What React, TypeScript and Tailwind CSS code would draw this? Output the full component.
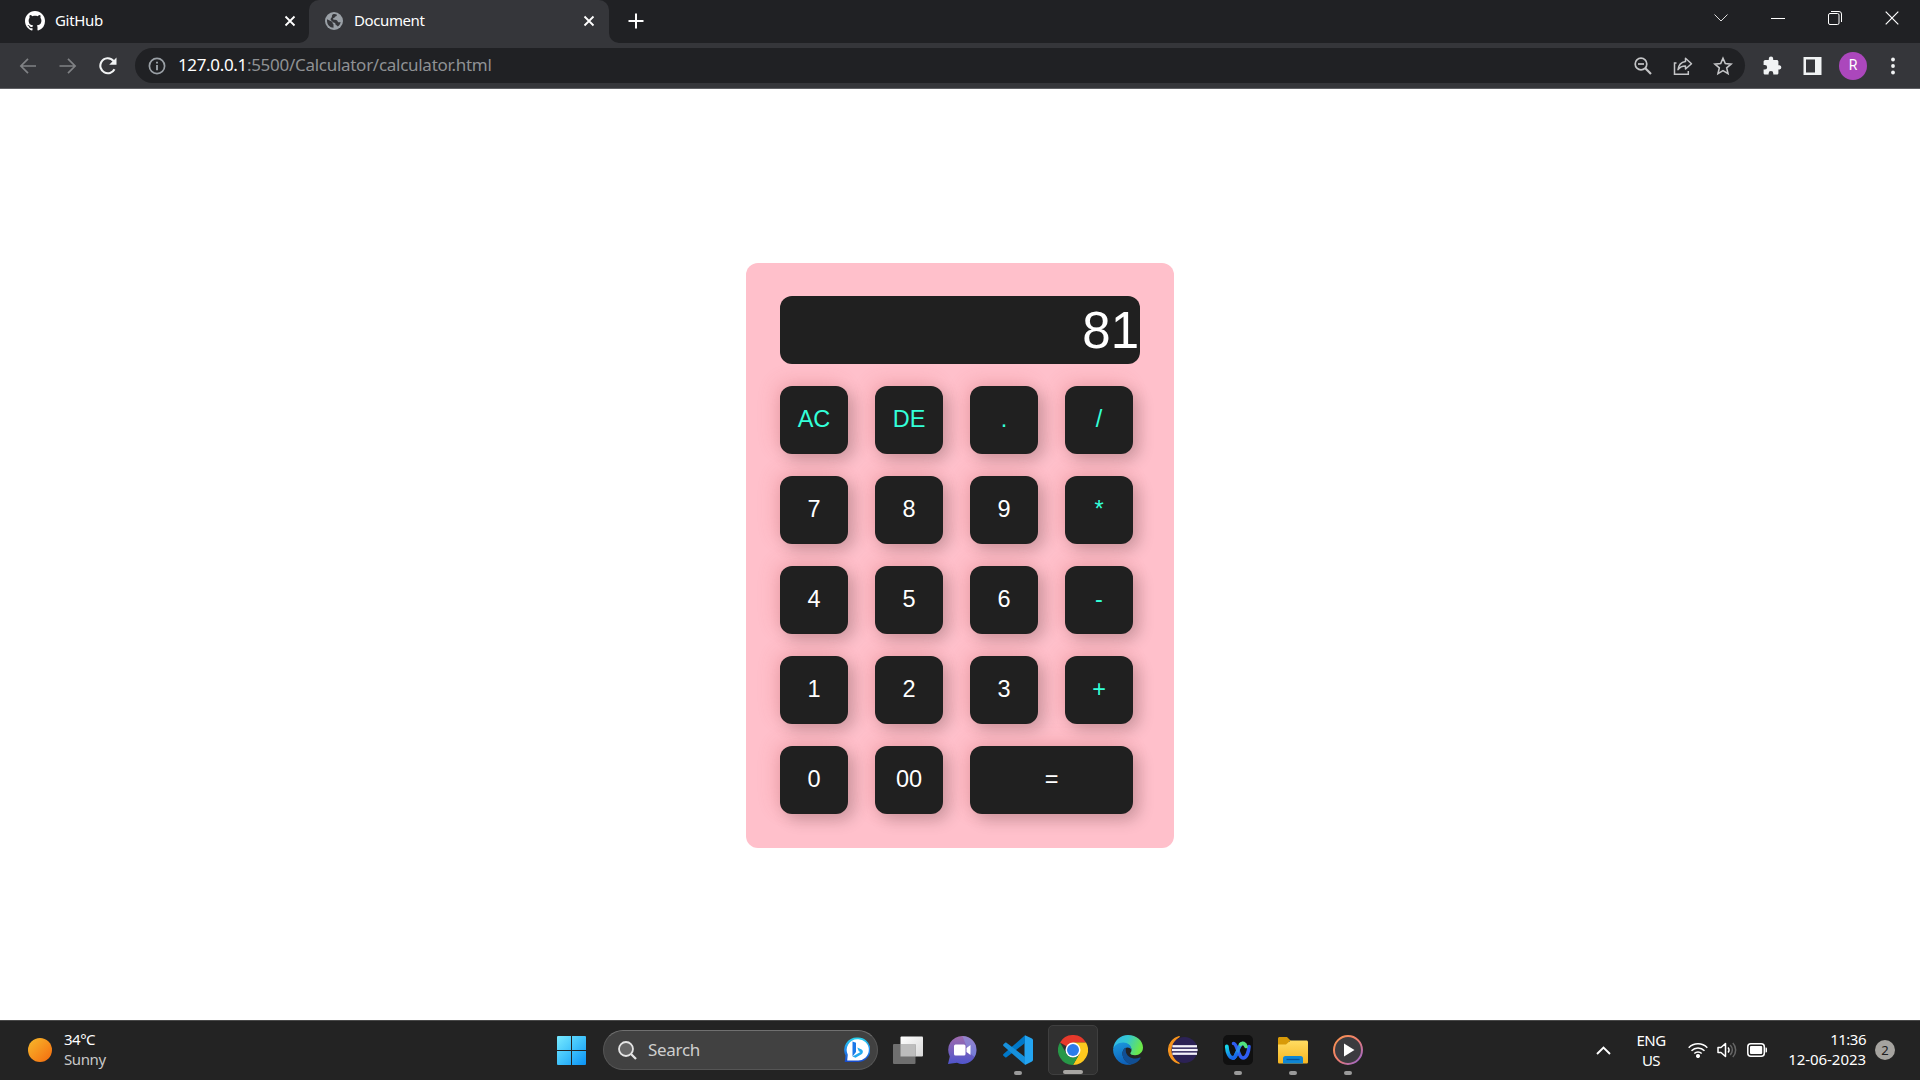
import React from "react";

function Close() {
  return (
    <svg width="12" height="12" viewBox="0 0 12 12" className="block shrink-0">
      <path d="M1.5 1.5l9 9M10.5 1.5l-9 9" stroke="#fff" strokeWidth="1.8" />
    </svg>
  );
}

function TabStrip() {
  return (
    <header className="flex h-[43px] bg-[#202124] text-[15px] leading-5 text-white">
      <div className="flex w-[309px] items-center rounded-br-[10px] bg-[#202124] pr-[13px] pb-px pl-[25px]">
        <svg width="20" height="20" viewBox="0 0 16 16" fill="#fff" className="shrink-0">
          <path d="M8 0C3.58 0 0 3.58 0 8c0 3.54 2.29 6.53 5.47 7.59.4.07.55-.17.55-.38 0-.19-.01-.82-.01-1.49-2.01.37-2.53-.49-2.69-.94-.09-.23-.48-.94-.82-1.13-.28-.15-.68-.52-.01-.53.63-.01 1.08.58 1.23.82.72 1.21 1.87.87 2.33.66.07-.52.28-.87.51-1.07-1.78-.2-3.64-.89-3.64-3.95 0-.87.31-1.59.82-2.15-.08-.2-.36-1.02.08-2.12 0 0 .67-.21 2.2.82.64-.18 1.32-.27 2-.27s1.36.09 2 .27c1.53-1.04 2.2-.82 2.2-.82.44 1.1.16 1.92.08 2.12.51.56.82 1.27.82 2.15 0 3.07-1.87 3.75-3.65 3.95.29.25.54.73.54 1.48 0 1.07-.01 1.93-.01 2.2 0 .21.15.46.55.38A8.01 8.01 0 0016 8c0-4.42-3.58-8-8-8z" />
        </svg>
        <span className="ml-[10px] flex-1 pb-[3px] tracking-[-0.3px]">GitHub</span>
        <Close />
      </div>
      <div className="relative flex w-[300px] items-center rounded-t-[10px] bg-[#35363a] pr-[14px] pb-px pl-4">
        <svg width="10" height="10" className="absolute bottom-0 -left-[10px]"><path d="M10 0v10H0A10 10 0 0010 0z" fill="#35363a" /></svg>
        <svg width="10" height="10" className="absolute -right-[10px] bottom-0"><path d="M0 0v10h10A10 10 0 010 0z" fill="#35363a" /></svg>
        <svg width="18" height="18" viewBox="0 0 18 18" className="shrink-0">
          <circle cx="9" cy="9" r="9" fill="#9aa0a6" />
          <path d="M2 7.200l5.200 2.500c.8 1 .1 2 1.300 2.500v3.500C4.800 15.600 2.200 12.800 2 9zM8 2.200c1.500-.4 2.800-.1 4 .5-.2 1.100-.7 1.700-1.900 1.800-.3 1.200-1 1.500-2 1.700-.1 1.200.6 1.600 1.600 1.500 1.500-.2 2.800.6 3.200 2 .2.900 1.300.8 2.700.2-.3 1.900-1.400 3.600-2.900 4.600-.4-1-.9-1.500-2-1.600 0-1.600-.8-2.300-2.200-2.500L5.700 8.100C5.500 6.800 6 5.800 7 5c-.4-1.300.1-2 1-2.800z" fill="#35363a" />
        </svg>
        <span className="ml-[11px] flex-1 pb-[3px] tracking-[-0.4px]">Document</span>
        <Close />
      </div>
      <svg width="16" height="16" viewBox="0 0 16 16" className="mt-[13px] ml-[19px]"><path d="M8 .5v15M.5 8h15" stroke="#fff" strokeWidth="2" /></svg>
      <div className="mr-[21px] ml-auto flex h-[36px] items-center gap-[43px]">
        <svg width="14" height="8" viewBox="0 0 14 8" fill="none" stroke="#ddd"><path d="M.5.5L7 7 13.500.5" /></svg>
        <svg width="14" height="14" viewBox="0 0 14 14"><path d="M0 7.500h14" stroke="#fff" /></svg>
        <svg width="14" height="14" viewBox="0 0 14 14" fill="none" stroke="#fff"><rect x=".5" y="2.500" width="10.500" height="11" rx="1.500" /><path d="M3 .5h8a2.500 2.500 0 012.500 2.500v8" /></svg>
        <svg width="14" height="14" viewBox="0 0 14 14" stroke="#fff" strokeWidth="1.200"><path d="M.7.7l12.600 12.600M13.300.7L.7 13.300" /></svg>
      </div>
    </header>
  );
}

function Toolbar() {
  return (
    <div className="flex h-[46px] items-center border-b border-[#5f6064] bg-[#35363a]">
      <div className="flex w-[135px] items-center pl-[19px]">
        <svg width="18" height="18" viewBox="0 0 18 18" fill="none" stroke="#808285" strokeWidth="1.700"><path d="M17 9H2M9 1.800L1.900 9 9 16.200" /></svg>
        <svg width="18" height="18" viewBox="0 0 18 18" fill="none" stroke="#808285" strokeWidth="1.700" className="ml-[22px]"><path d="M.5 9h15M9 1.800L16.100 9 9 16.200" /></svg>
        <svg width="19" height="18" viewBox="0 0 19 18" className="ml-[22px]"><path d="M15.500 12.200A7.300 7.300 0 112.200 5.200 7.300 7.300 0 0114.800 4.500" fill="none" stroke="#f1f3f4" strokeWidth="2.100" /><path d="M17.500.5v7.300h-7.300z" fill="#f1f3f4" /></svg>
      </div>
      <div className="flex h-[35px] w-[1610px] items-center rounded-full bg-[#202124] pr-3 pl-[13px]">
        <svg width="18" height="18" viewBox="0 0 18 18" fill="none" stroke="#9aa0a6" strokeWidth="1.700"><circle cx="9" cy="9" r="7.600" /><path d="M9 8v5.200M9 4.800v1.700" strokeWidth="1.900" /></svg>
        <span className="ml-3 flex-1 pb-px text-[17px] leading-6 tracking-[-0.28px] whitespace-nowrap text-[#8f9194]"><span className="tracking-[-0.35px] text-white">127.0.0.1</span>:5500/Calculator/calculator.html</span>
        <svg width="18" height="18" viewBox="0 0 18 18" fill="none" stroke="#c4c5c7" strokeWidth="1.700"><circle cx="7" cy="7" r="5.800" /><path d="M11.300 11.300l5.700 5.700" strokeWidth="2.200" /><path d="M4 7h6" /></svg>
        <svg width="20" height="20" viewBox="0 0 20 20" fill="none" stroke="#c4c5c7" strokeWidth="1.500" className="ml-[21px]"><path d="M3.500 7H1.500v11.200h13.800V15" /><path d="M12.500 2.200L18.500 7.700l-6 5.300V9.900c-3.400 0-5.700 1-7.500 3.800.4-4 2.800-7.400 7.500-8.200z" strokeLinejoin="round" /></svg>
        <svg width="20" height="20" viewBox="0 0 20 20" fill="none" stroke="#c4c5c7" strokeWidth="1.600" className="ml-5"><path d="M10 2.300l2.300 5.300 5.800.5-4.400 3.800 1.300 5.700-5-3-5 3 1.300-5.700-4.400-3.800 5.800-.5z" /></svg>
      </div>
      <svg width="20" height="20" viewBox="0 0 20 20" fill="#f1f3f4" className="ml-[17px]"><path d="M17.600 9.200h-1.200V5.600c0-1-.8-1.700-1.700-1.700h-3.500V2.800a2.200 2.200 0 00-4.400 0v1.100H3.300c-1 0-1.700.8-1.700 1.700v3.300h1.200a2.300 2.300 0 010 4.700H1.600v3.300c0 1 .8 1.700 1.700 1.700h3.300v-1.200a2.300 2.300 0 014.700 0v1.200h3.400c1 0 1.700-.8 1.700-1.700v-3.400h1.200a2.200 2.200 0 000-4.300z" /></svg>
      <svg width="19" height="18" viewBox="0 0 19 18" className="ml-[21px]"><path fillRule="evenodd" d="M.5 0h18v18H.5zM3 2.500v13h9v-13z" fill="#f1f3f4" /></svg>
      <div className="ml-[17px] flex size-7 items-center justify-center rounded-full bg-[#ab47bc] font-['Roboto',sans-serif] text-[14px] text-white">R</div>
      <svg width="4" height="18" viewBox="0 0 4 18" fill="#f1f3f4" className="ml-[24px]"><circle cx="2" cy="2.500" r="1.900" /><circle cx="2" cy="9" r="1.900" /><circle cx="2" cy="15.500" r="1.900" /></svg>
    </div>
  );
}

const keys = ["AC", "DE", ".", "/", "7", "8", "9", "*", "4", "5", "6", "-", "1", "2", "3", "+", "0", "00", "="];
const operators = ["AC", "DE", ".", "/", "*", "-", "+"];

function Calculator() {
  return (
    <section className="h-[585px] w-[428px] rounded-[12px] bg-[#ffc0cb] px-[34px] pt-[33px] font-['Liberation_Sans',Arial,sans-serif]">
      <div className="flex h-[68px] w-[360px] items-center justify-end rounded-[12px] bg-[#202020] pr-[1px] text-[51px] leading-none text-white">81</div>
      <div className="mt-[22px] grid grid-cols-[repeat(4,68px)] gap-x-[27px] gap-y-[22px]">
        {keys.map((k) => (
          <button
            key={k}
            className={`h-[68px] rounded-[12px] bg-[#202020] pb-px text-[23.500px] leading-none shadow-[-4px_-4px_19px_rgba(205,70,70,0.2),6px_6px_16px_rgba(0,0,0,0.2)] ${operators.includes(k) ? "text-[#33ffd8]" : "text-white"} ${k === "=" ? "col-span-2" : ""}`}
          >
            {k}
          </button>
        ))}
      </div>
    </section>
  );
}

function Dot() {
  return <span className="absolute -bottom-[10px] left-[11px] h-1 w-2 rounded-full bg-[#9a9a9a]" />;
}

function App30({ children, running }: { children: React.ReactNode; running?: boolean }) {
  return (
    <div className="relative size-[30px]">
      <svg width="30" height="30" viewBox="0 0 30 30" className="block">{children}</svg>
      {running && <Dot />}
    </div>
  );
}

function Grad({ id, a, b, c, x2 = 1, y2 = 1 }: { id: string; a: string; b: string; c?: string; x2?: number; y2?: number }) {
  return (
    <linearGradient id={id} x1="0" y1="0" x2={x2} y2={y2}>
      <stop stopColor={a} />
      {c && <stop offset=".5" stopColor={c} />}
      <stop offset="1" stopColor={b} />
    </linearGradient>
  );
}

function Taskbar() {
  return (
    <footer className="flex h-[60px] items-center border-t border-[#484848] bg-[#232323] pb-px text-[15px] leading-5 text-white">
      <div className="flex w-[557px] items-center pl-7">
        <div className="size-6 rounded-full bg-linear-to-br from-[#f5b92b] to-[#f3680d]" />
        <div className="ml-[12px] pb-[2px] tracking-[-0.5px]"><div>34°C</div><div className="tracking-[-0.4px] text-[#c8c8c8]">Sunny</div></div>
      </div>
      <svg width="29" height="29" viewBox="0 0 29 29">
        <defs><Grad id="win" a="#78eaff" b="#0a92f5" c="#3fc2fb" /></defs>
        <path d="M1 0h13v14H0V1a1 1 0 011-1zM15 0h13a1 1 0 011 1v13H15zM0 15h14v14H1a1 1 0 01-1-1zM15 15h14v13a1 1 0 01-1 1H15z" fill="url(#win)" />
      </svg>
      <div className="ml-[17px] flex h-10 w-[275px] items-center rounded-full border border-[#555] border-t-[#707070] bg-[#414141] pr-[7px] pl-[14px]">
        <svg width="19" height="19" viewBox="0 0 19 19" stroke="#e4e4e4" strokeWidth="1.800" fill="#666"><circle cx="8" cy="8" r="7" /><path d="M13 13l5 5" strokeWidth="2.300" /></svg>
        <span className="ml-[11px] flex-1 text-[17px] tracking-[-0.3px] text-[#cfcfcf]">Search</span>
        <svg width="26" height="26" viewBox="0 0 26 26">
          <defs><Grad id="bing" a="#27d5ee" b="#1648c8" c="#218cf0" x2={0} /></defs>
          <path d="M13 0.500A12.300 12.300 0 1113 25H.7l.8-6.500A12.400 12.400 0 0113 .5z" fill="url(#bing)" />
          <path d="M13.200 2.300a10.600 10.600 0 110 21.100H3.200l.6-5.700A10.600 10.600 0 0113.200 2.300z" fill="#fff" />
          <path d="M8.500 4.500l3.500 1.200V15l-3.500 4.500z" fill="#1a78e8" /><path d="M8.500 19.500l3 1.300 6-3.500c1.800-1.100 1.900-3.600.1-4.700l-4.300-2 1.500 3.700 1.700.8z" fill="#24a9ee" />
        </svg>
      </div>
      <svg width="30" height="28" viewBox="0 0 30 28" className="ml-[15px]">
        <defs><Grad id="tv" a="#fff" b="#d8d8d8" /></defs>
        <rect x="7.500" y=".5" width="22.500" height="20" rx="1" fill="url(#tv)" /><rect x="0" y="8" width="22.500" height="20" rx="1" fill="#6f6f6f" /><path d="M7.500 8h15v12.500h-15z" fill="#bdbdbd" />
      </svg>
      <div className="ml-[25px] flex items-center gap-[25px]">
        <App30>
          <defs><Grad id="chat2" a="#a06bad" b="#4f55cc" x2={0} /></defs>
          <path d="M14.500 1a14 14 0 110 28c-2 0-3.700-.4-5.500-1.200L0 29l1.800-7.500A14 14 0 0114.500 1z" fill="url(#chat2)" />
          <path d="M14.500 1a14 14 0 0112 21C20.500 18 17.500 9 14.500 1z" fill="#88a5f1" opacity=".45" />
          <rect x="6" y="9.500" width="11.500" height="11" rx="1.500" fill="#fff" /><path d="M18.500 13l4-3v10l-4-3z" fill="#fff" />
        </App30>
        <App30 running>
          <path d="M22 0.300l7 3.200c.6.300 1 .9 1 1.500v20c0 .6-.4 1.200-1 1.500L22 30l-.5-7V7z" fill="#23a4f1" />
          <path d="M22 .3V8L3.500 22.300c-.4.300-1 .3-1.400 0L.5 20.800c-.6-.5-.6-1.200 0-1.700z" fill="#0078c8" />
          <path d="M22 29.800V22L3.500 7.700c-.4-.3-1-.3-1.400 0L.5 9.200c-.6.500-.6 1.200 0 1.700z" fill="#1690dc" />
        </App30>
        <div className="relative -mx-[10px] flex size-[50px] items-center justify-center rounded-[5px] border border-[#3f3f3f] bg-[#303030]">
          <svg width="30" height="30" viewBox="0 0 30 30">
            <path d="M15 15L2 7.500A15 15 0 0128 7.500H15z" fill="#e6392b" />
            <path d="M15 7.500h13A15 15 0 0115 30l6.500-11.200z" fill="#fdc81e" />
            <path d="M2 7.500l6.500 11.300a7.500 7.500 0 0013 0L15 30A15 15 0 012 7.500z" fill="#279847" />
            <circle cx="15" cy="15" r="7.500" fill="#fff" /><circle cx="15" cy="15" r="6" fill="#2c7bea" />
          </svg>
          <span className="absolute bottom-0 left-[14px] h-1 w-5 rounded-full bg-[#a8a6a3]" />
        </div>
        <App30>
          <defs><Grad id="edge1" a="#2fb6ee" b="#6be84a" c="#35c8d0" y2={0.3} /><Grad id="edge2" a="#1c9bde" b="#0e62ba" x2={0.3} /></defs>
          <path d="M.2 13.500C1.200 5.600 7.200 0 15 0c8.600 0 15 5.800 15 12.500 0 4.700-3.600 7.700-8 7.700-3 0-4.700-1-4.700-2 0-.8 1.200-1.200 1.200-3.300 0-3-3-5.700-7-5.700C6 9.200 1.500 11.200.2 13.500z" fill="url(#edge1)" />
          <path d="M.1 14C1 10.400 5.400 7.500 10.200 7.500c4.700 0 8.300 3 8.300 7.400-1-1.700-2.500-2.400-4-2.400-3.300 0-5 3-5 6.200 0 4.800 4 9.800 9.500 10.500A15 15 0 01.1 14z" fill="url(#edge2)" />
          <path d="M12.900 12.800c-2.300 1-3.400 3.300-3.400 5.900 0 5.500 4.700 10.700 9.900 10.600 3.600-1 6.600-3.300 8.100-6.100.3-.6-.2-1-.8-.7-5.500 2.800-13.500-.6-13.900-6.600-.1-1.200 0-2.200.1-3.100z" fill="#114f94" />
        </App30>
        <App30>
          <path d="M11.500 1.500A13.800 13.800 0 0011.500 28.500 15.500 15.500 0 0111.500 1.500z" fill="#f7941e" stroke="#f7941e" strokeWidth="1.200" />
          <circle cx="16.500" cy="15" r="13" fill="#2c2255" /><path d="M4.500 11.200h24.500M4 15h25.500M4.500 18.700h24.500" stroke="#8a83ab" strokeWidth="2.600" /><path d="M4.500 11.200h24.500M4 15h25.500M4.500 18.700h24.500" stroke="#f4f2f9" strokeWidth="1.900" />
        </App30>
        <App30 running>
          <defs><Grad id="wx1" a="#15d8e8" b="#1765e8" x2={0.5} /></defs>
          <rect width="30" height="30" rx="5" fill="#101010" />
          <path d="M10.500 8.500c4 0 4.800 14.500 9.500 14.500 3.800 0 5.700-6 6-11.500" stroke="#2f5df2" strokeWidth="3.600" fill="none" strokeLinecap="round" />
          <path d="M10.300 23c3.700 0 4.700-14.500 9.700-14.500" stroke="#2a8bea" strokeWidth="3.600" fill="none" strokeLinecap="round" />
          <path d="M3.800 11.500c.4 6 2.500 11.500 6.200 11.500 1.500 0 2.600-1.800 3.500-4.500" stroke="url(#wx1)" strokeWidth="3.800" fill="none" strokeLinecap="round" />
          <path d="M17.500 9.300c2-2 4.500-.8 5.500 2.200" stroke="#50e37d" strokeWidth="3.600" fill="none" strokeLinecap="round" />
        </App30>
        <App30 running>
          <defs><Grad id="fold" a="#ffdc62" b="#f6b521" x2={0} /></defs>
          <path d="M0 3.500C0 2.700.7 2 1.500 2H9l4 4h-2v4H0z" fill="#d89a08" />
          <path d="M0 9.500h8l4.500-4h16c.8 0 1.500.7 1.500 1.500v20c0 1-.7 1.500-1.500 1.500h-27C.7 28.500 0 28 0 27z" fill="url(#fold)" />
          <path d="M5 28.500V23.500a2.500 2.500 0 012.500-2.500h15a2.500 2.500 0 012.500 2.500v5z" fill="#0f86d4" /><path d="M8.500 24.500h13" stroke="#07549b" strokeWidth="1.300" />
        </App30>
        <App30 running>
          <defs><Grad id="mp" a="#f9944c" b="#8e62d6" c="#ee7d70" /></defs>
          <circle cx="15" cy="15" r="14" fill="#3b3b3f" stroke="url(#mp)" strokeWidth="2" /><path d="M11 8.500l10.500 6.500L11 21.500z" fill="#fff" />
        </App30>
      </div>
      <div className="mr-[25px] ml-auto flex items-center">
        <svg width="15" height="9" viewBox="0 0 15 9" fill="none" stroke="#fff" strokeWidth="1.900"><path d="M1 8l6.500-6.500L14 8" /></svg>
        <div className="ml-[25px] w-[30px] pb-px text-center tracking-[-0.5px]"><div>ENG</div><div>US</div></div>
        <svg width="20" height="16" viewBox="0 0 20 16" fill="none" stroke="#fff" strokeWidth="1.500" className="ml-[22px]"><path d="M.7 5.700a13 13 0 0118.600 0M3.500 8.700a9 9 0 0113 0M6.300 11.500a5.200 5.200 0 017.400 0" /><circle cx="10" cy="14" r="1.300" fill="#fff" /></svg>
        <svg width="20" height="18" viewBox="0 0 20 18" fill="none" stroke="#fff" strokeWidth="1.500" className="ml-[9px]"><path d="M1 6.500h3L8.500 2.500v13L4 11.500H1z" strokeLinejoin="round" /><path d="M11 6.500a3.500 3.500 0 010 5" /><path d="M13.200 4a7 7 0 010 10M15.800 2a10 10 0 010 14" stroke="#666" /></svg>
        <svg width="21" height="14" viewBox="0 0 21 14" className="ml-[10px]"><rect x=".8" y=".8" width="16.500" height="12.400" rx="3" fill="none" stroke="#fff" strokeWidth="1.500" /><rect x="3" y="3" width="12.200" height="8" rx="1" fill="#fff" /><path d="M18.500 4.500h.5a1 1 0 011 1v3a1 1 0 01-1 1h-.5z" fill="#fff" /></svg>
        <div className="ml-[20px] w-[78px] pb-[2px] text-right tracking-[-0.05px]"><div className="tracking-[-0.5px]">11:36</div><div>12-06-2023</div></div>
        <div className="ml-[9px] flex size-5 items-center justify-center rounded-full bg-[#a5a39f] text-[13px] text-[#202020]">2</div>
      </div>
    </footer>
  );
}

export default function App() {
  return (
    <div className="flex h-[1080px] w-[1920px] flex-col overflow-hidden bg-white font-['Noto_Sans','Open_Sans',sans-serif]">
      <TabStrip />
      <Toolbar />
      <main className="flex flex-1 items-start justify-center pt-[174px]">
        <Calculator />
      </main>
      <Taskbar />
    </div>
  );
}
